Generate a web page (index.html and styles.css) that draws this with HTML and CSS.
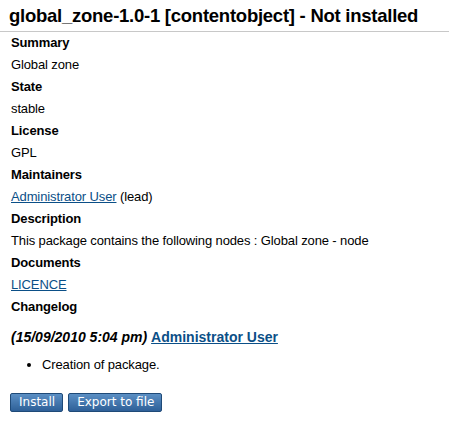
FILE: index.html
```html
<!DOCTYPE html>
<html>
<head>
<meta charset="utf-8">
<link rel="stylesheet" href="styles.css">
</head>
<body>
<div class="page">
  <h1 class="title">global_zone-1.0-1 [contentobject] - Not installed</h1>
  <div class="rule"></div>
  <div class="content">
    <div class="label">Summary</div>
    <div class="value">Global zone</div>
    <div class="label">State</div>
    <div class="value">stable</div>
    <div class="label">License</div>
    <div class="value">GPL</div>
    <div class="label">Maintainers</div>
    <div class="value"><a href="#">Administrator User</a> (lead)</div>
    <div class="label">Description</div>
    <div class="value">This package contains the following nodes : Global zone - node</div>
    <div class="label">Documents</div>
    <div class="value"><a href="#">LICENCE</a></div>
    <div class="label">Changelog</div>
    <div class="log-head">(15/09/2010 5:04 pm) <a href="#">Administrator User</a></div>
    <ul class="log-list">
      <li>Creation of package.</li>
    </ul>
    <div class="buttons">
      <button class="btn">Install</button>
      <button class="btn">Export to file</button>
    </div>
  </div>
</div>
</body>
</html>
```
FILE: styles.css
```css
html, body {
  margin: 0;
  padding: 0;
  background: #ffffff;
}
body {
  font-family: "Liberation Sans", Arial, sans-serif;
  font-size: 13px;
  color: #000;
  letter-spacing: -0.12px;
}
.page {
  padding-top: 4px;
}
.title {
  margin: 0 0 0 9px;
  font-size: 18.5px;
  font-weight: bold;
  line-height: 24px;
  letter-spacing: -0.25px;
  white-space: nowrap;
}
.rule {
  height: 1px;
  background: #c8c8c8;
  margin-top: 3px;
}
.content {
  padding-left: 11px;
  padding-top: 0;
}
.label, .value {
  line-height: 22px;
}
.label {
  font-weight: bold;
}
a {
  color: #0b4f87;
  text-decoration: underline;
}
.log-head {
  font-size: 14px;
  font-weight: bold;
  font-style: italic;
  letter-spacing: 0;
  margin-top: 8px;
  line-height: 22px;
}
.log-head a {
  font-style: normal;
}
.log-list {
  margin: 6px 0 0 0;
  padding-left: 31px;
  line-height: 22px;
}
.buttons {
  margin-top: 17px;
  display: flex;
  gap: 5px;
  margin-left: -1px;
}
.btn {
  font-family: "DejaVu Sans", Verdana, sans-serif;
  font-size: 12px;
  letter-spacing: 0;
  color: #fff;
  height: 19px;
  padding: 0 7px 0 8px;
  border: 1px solid #1f4a78;
  border-radius: 2px;
  background: linear-gradient(#5b8fc4, #2e6098);
  line-height: 17px;
}
```
